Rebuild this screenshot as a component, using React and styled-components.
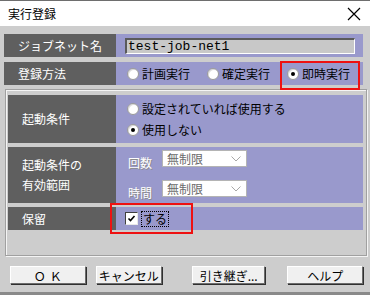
import styled, { createGlobalStyle } from "styled-components";

const GlobalStyle = createGlobalStyle`
    body {
        margin: 0;
        font-family: "Noto Sans CJK JP", "Liberation Sans", sans-serif;
        font-size: 12px;
    }
`

export default function App() {
    return (
        <Window>
            <GlobalStyle />
            <TitleBar>
                <span>実行登録</span>
                <CloseIcon width="14" height="14" viewBox="0 0 14 14">
                    <path d="M1 1 L13 13 M13 1 L1 13" stroke="#000" strokeWidth="1.2" />
                </CloseIcon>
            </TitleBar>

            <Body>
                <Row>
                    <Label>ジョブネット名</Label>
                    <Content>
                        <TextInput>test-job-net1</TextInput>
                    </Content>
                </Row>

                <Row $top={5}>
                    <Label>登録方法</Label>
                    <Content $pad={11} $gap={17}>
                        <RadioItem>
                            <Radio />計画実行
                        </RadioItem>
                        <RadioItem>
                            <Radio />確定実行
                        </RadioItem>
                        <RadioItem $marked $mark="-5px -10px -8px -7px">
                            <Radio $checked />即時実行
                        </RadioItem>
                    </Content>
                </Row>

                <Group>
                    <InnerRow $height={48}>
                        <InnerLabel>起動条件</InnerLabel>
                        <ColumnContent>
                            <RadioItem>
                                <Radio />設定されていれば使用する
                            </RadioItem>
                            <RadioItem>
                                <Radio $checked />使用しない
                            </RadioItem>
                        </ColumnContent>
                    </InnerRow>

                    <InnerRow $height={56}>
                        <InnerLabel $lines>起動条件の<br />有効範囲</InnerLabel>
                        <LimitContent>
                            <SubRow>
                                <DisabledLabel>回数</DisabledLabel>
                                <Select>
                                    無制限
                                    <Chevron width="10" height="6" viewBox="0 0 10 6">
                                        <path d="M0.5 0.5 L5 5 L9.5 0.5" fill="none" stroke="#a8a8a8" />
                                    </Chevron>
                                </Select>
                            </SubRow>
                            <SubRow>
                                <DisabledLabel>時間</DisabledLabel>
                                <Select>
                                    無制限
                                    <Chevron width="10" height="6" viewBox="0 0 10 6">
                                        <path d="M0.5 0.5 L5 5 L9.5 0.5" fill="none" stroke="#a8a8a8" />
                                    </Chevron>
                                </Select>
                            </SubRow>
                        </LimitContent>
                    </InnerRow>

                    <InnerRow $height={23}>
                        <InnerLabel>保留</InnerLabel>
                        <Content $pad={9}>
                            <RadioItem $marked $mark="-8px -24px -7px -15px">
                                <CheckBox>
                                    <svg width="9" height="9" viewBox="0 0 9 9">
                                        <path d="M1.5 4.5 L3.5 6.5 L7.5 2" fill="none" stroke="#000" strokeWidth="1.6" />
                                    </svg>
                                </CheckBox>
                                <FocusText>する</FocusText>
                            </RadioItem>
                        </Content>
                    </InnerRow>
                </Group>

                <ButtonBar>
                    <Button $w={80} $spaced>ＯＫ</Button>
                    <Button $w={70}>キャンセル</Button>
                    <Button $w={78} $left={20}>引き継ぎ...</Button>
                    <Button $w={80} $left={12}>ヘルプ</Button>
                </ButtonBar>
            </Body>
        </Window>
    );
}

const Window = styled.div`
    width: 370px;
    height: 295px;
    box-sizing: border-box;
    background: #cdcdcd;
    border-top: 1px solid #6e6e6e;
    display: flex;
    flex-direction: column;
    overflow: hidden;
`

const TitleBar = styled.div`
    height: 25px;
    background: #ffffff;
    display: flex;
    align-items: center;
    justify-content: space-between;
    padding: 0 8px 0 8px;
    font-size: 12px;
    color: #000;
`

const CloseIcon = styled.svg`
    margin-right: 1px;
`

const Body = styled.div`
    flex: 1;
    padding: 8px 7px 0 4px;
    border-bottom: 3px solid #8a8a8a;
`

const Row = styled.div`
    display: flex;
    height: 23px;
    margin-top: ${p => p.$top || 0}px;
`

const Label = styled.div`
    width: 98px;
    padding-left: 14px;
    background: #5f5f5f;
    color: #fff;
    display: flex;
    align-items: center;
`

const Content = styled.div`
    flex: 1;
    background: #9999cc;
    display: flex;
    align-items: center;
    gap: ${p => p.$gap || 0}px;
    padding-left: ${p => p.$pad ?? 9}px;
`

const TextInput = styled.div`
    width: 226px;
    height: 13px;
    box-sizing: content-box;
    background: #c8c8c8;
    border-top: 2px solid #5a5a5a;
    border-left: 2px solid #5a5a5a;
    border-bottom: 1px solid #ffffff;
    border-right: 1px solid #ffffff;
    padding: 0 0 0 1px;
    font-family: "Liberation Mono", "DejaVu Sans Mono", monospace;
    font-size: 13px;
    line-height: 14px;
`

const RadioItem = styled.div`
    position: relative;
    display: flex;
    align-items: center;
    height: 16px;
    gap: 3px;
    color: #000;

    ${p => p.$marked && `
        &::after {
            content: "";
            position: absolute;
            inset: ${p.$mark};
            border: 2px solid #ee1111;
            pointer-events: none;
        }
    `}
`

const Radio = styled.span`
    width: 10px;
    height: 10px;
    border-radius: 50%;
    background: #fff;
    border: 1px solid #9a9a9a;
    box-shadow: inset 1px 1px 0 #dcdcdc;
    display: flex;
    align-items: center;
    justify-content: center;

    &::after {
        content: "";
        width: 4px;
        height: 4px;
        border-radius: 50%;
        background: ${p => p.$checked ? "#000" : "transparent"};
    }
`

const Group = styled.div`
    margin: 4px 0 0 1px;
    width: 355px;
    padding: 5px 3px 25px 2px;
    border: 1px solid #a0a0a0;
    box-shadow: inset 1px 1px 0 #f4f4f4, 1px 1px 0 #f4f4f4;
    display: flex;
    flex-direction: column;
    gap: 4px;
`

const InnerRow = styled.div`
    display: flex;
    height: ${p => p.$height}px;
`

const InnerLabel = styled.div`
    width: 94px;
    padding-left: 14px;
    background: #5f5f5f;
    color: #fff;
    display: flex;
    align-items: center;
    line-height: ${p => p.$lines ? "20px" : "16px"};
`

const ColumnContent = styled.div`
    flex: 1;
    background: #9999cc;
    display: flex;
    flex-direction: column;
    justify-content: center;
    gap: 5px;
    padding-left: 11px;
`

const LimitContent = styled.div`
    flex: 1;
    background: #9999cc;
    display: flex;
    flex-direction: column;
    gap: 9px;
    padding: 3px 0 0 12px;
`

const SubRow = styled.div`
    display: flex;
    align-items: flex-start;
    gap: 10px;
`

const DisabledLabel = styled.span`
    width: 24px;
    margin-top: 5px;
    color: #ffffff;
    line-height: 16px;
    text-shadow: 1px 1px 0 #8c8c8c;
`

const Select = styled.div`
    width: 79px;
    height: 15px;
    background: #fff;
    border: 1px solid #b4b4b4;
    padding-left: 4px;
    display: flex;
    align-items: center;
    justify-content: space-between;
    color: #6a6a6a;
    line-height: 15px;
`

const Chevron = styled.svg`
    margin-right: 5px;
`

const CheckBox = styled.span`
    width: 11px;
    height: 11px;
    background: #fff;
    border-top: 1px solid #404040;
    border-left: 1px solid #404040;
    border-bottom: 1px solid #e8e8e8;
    border-right: 1px solid #e8e8e8;
    display: flex;
    align-items: center;
    justify-content: center;
`

const FocusText = styled.span`
    border: 1px dotted #000;
    padding: 0 1px;
    line-height: 14px;
`

const ButtonBar = styled.div`
    display: flex;
    gap: 10px;
    margin: 10px 0 0 6px;
`

const Button = styled.div`
    width: ${p => p.$w}px;
    height: 18px;
    box-sizing: border-box;
    margin-left: ${p => p.$left || 0}px;
    background: #f0f0f0;
    border-top: 1px solid #ffffff;
    border-left: 1px solid #ffffff;
    border-bottom: 1px solid #6c6c6c;
    border-right: 1px solid #6c6c6c;
    box-shadow: 1px 1px 0 #303030;
    display: flex;
    align-items: center;
    justify-content: center;
    color: #000;
    white-space: nowrap;
    letter-spacing: ${p => p.$spaced ? "4px" : "0"};
    padding-left: ${p => p.$spaced ? "4px" : "0"};
`
